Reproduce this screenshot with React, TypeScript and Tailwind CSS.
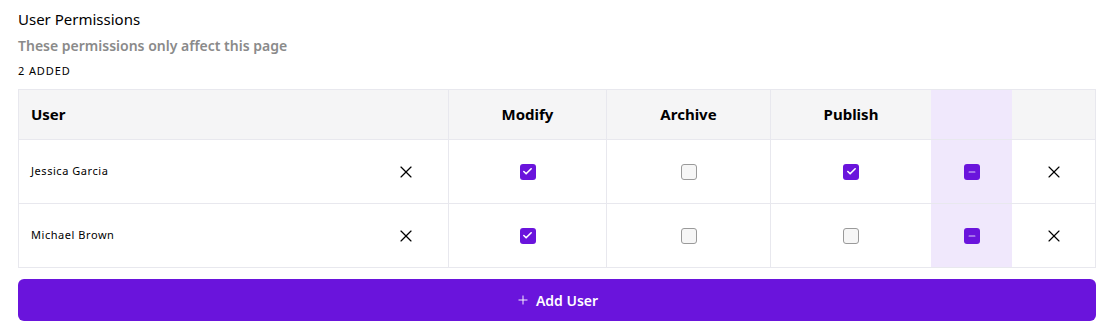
import React from 'react';
import { X, Plus, Check, Minus } from 'lucide-react';

type Row = { name: string; modify: boolean; archive: boolean; publish: boolean };

const rows: Row[] = [
  { name: 'Jessica Garcia', modify: true, archive: false, publish: true },
  { name: 'Michael Brown', modify: true, archive: false, publish: false },
];

const Box = ({ checked }: { checked: boolean }) =>
  checked ? (
    <span className="flex h-4 w-4 items-center justify-center rounded-[3px] bg-[#6a14dc]">
      <Check size={11} strokeWidth={3.5} className="text-white" />
    </span>
  ) : (
    <span className="h-4 w-4 rounded-[3px] border border-[#9a9a9a] bg-[#f6f6f6]" />
  );

const Indeterminate = () => (
  <span className="flex h-4 w-4 items-center justify-center rounded-[3px] bg-[#6a14dc]">
    <Minus size={10} strokeWidth={2.5} className="text-[#d9c8f7]" />
  </span>
);

export default function App() {
  return (
    <div className="min-h-[336px] bg-white px-[18px] pt-[8px] font-['Noto_Sans',sans-serif] text-black">
      <h2 className="text-[15px] leading-[22px]">User Permissions</h2>
      <p className="mt-[6px] text-[14px] font-semibold leading-[19px] text-[#8a8a8a]">
        These permissions only affect this page
      </p>
      <p className="mt-[9px] text-[11px] leading-[14px] tracking-[0.08em]">2 ADDED</p>

      <div className="mt-[11px] border border-[#e8e8ee]">
        <div className="grid h-[49px] grid-cols-[429px_158px_164px_161px_81px_1fr] bg-[#f5f5f6] text-[15px] font-bold">
          <div className="flex items-center pl-[12px]">User</div>
          <div className="flex items-center justify-center border-l border-[#e8e8ee]">Modify</div>
          <div className="flex items-center justify-center border-l border-[#e8e8ee]">Archive</div>
          <div className="flex items-center justify-center border-l border-[#e8e8ee]">Publish</div>
          <div className="bg-[#f0e8fc]" />
          <div />
        </div>
        {rows.map((r) => (
          <div
            key={r.name}
            className="grid h-[64px] grid-cols-[429px_158px_164px_161px_81px_1fr] border-t border-[#e8e8ee]"
          >
            <div className="flex items-center justify-between pl-[12px] pr-[32px] text-[11px] tracking-[0.05em]">
              <span>{r.name}</span>
              <X size={20} strokeWidth={1.4} />
            </div>
            <div className="flex items-center justify-center border-l border-[#e8e8ee]">
              <Box checked={r.modify} />
            </div>
            <div className="flex items-center justify-center border-l border-[#e8e8ee]">
              <Box checked={r.archive} />
            </div>
            <div className="flex items-center justify-center border-l border-[#e8e8ee]">
              <Box checked={r.publish} />
            </div>
            <div className="flex items-center justify-center bg-[#f0e8fc]">
              <Indeterminate />
            </div>
            <div className="flex items-center justify-center">
              <X size={20} strokeWidth={1.4} />
            </div>
          </div>
        ))}
      </div>

      <button className="mt-[11px] flex h-[42px] w-full items-center justify-center gap-[6px] rounded-[6px] bg-[#6a14dc] text-[14px] font-semibold text-white">
        <Plus size={14} strokeWidth={1.6} />
        Add User
      </button>
    </div>
  );
}
